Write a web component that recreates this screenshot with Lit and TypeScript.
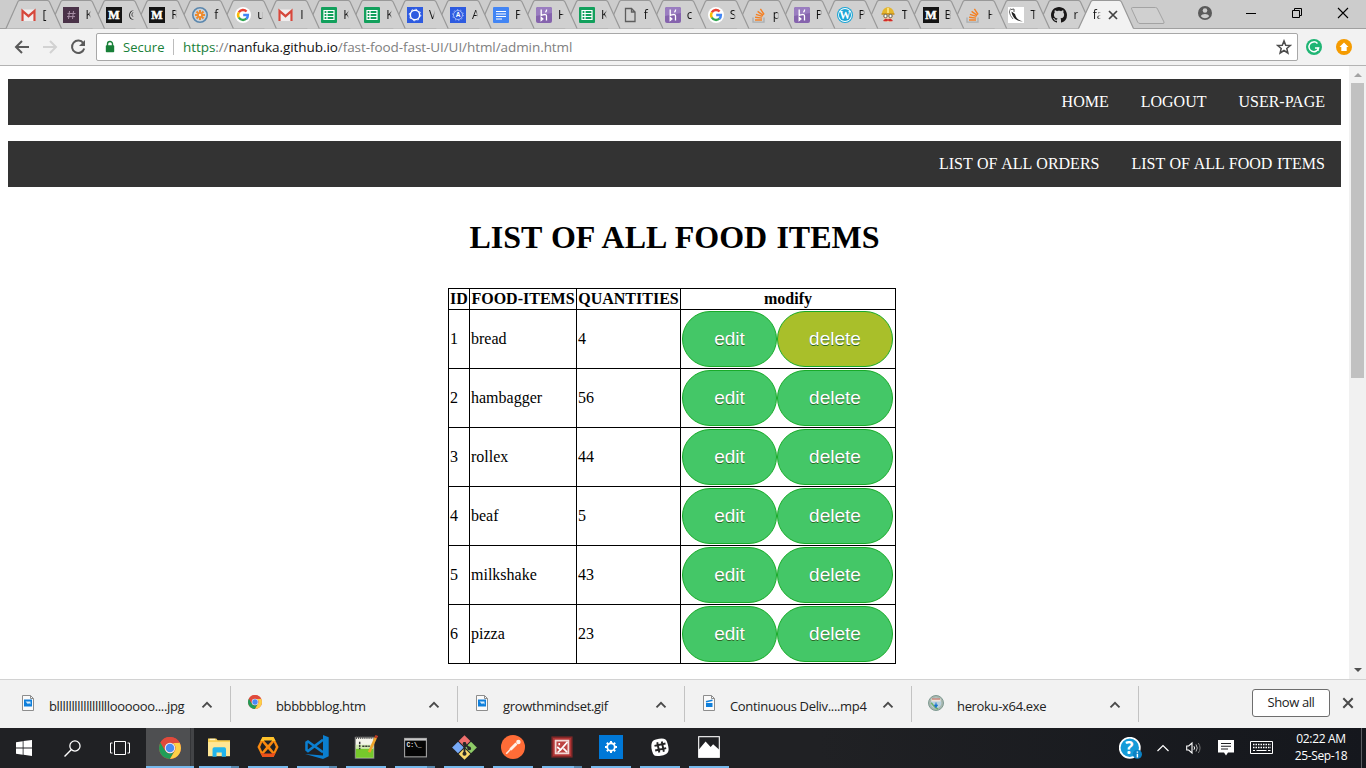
import { LitElement, html, svg, css } from "lit";
import { customElement, property } from "lit/decorators.js";
import { classMap } from "lit/directives/class-map.js";

const mediumIcon = svg`<rect width="16" height="16" fill="#141414"/><text x="8" y="12.2" text-anchor="middle" font-family="Liberation Serif, serif" font-weight="700" font-size="12" fill="#fff" stroke="#fff" stroke-width=".5">M</text>`;
const gmailIcon = svg`<rect x=".5" y="2.5" width="14" height="11.5" rx="1" fill="#f1eeee"/><path d="M1.5 14V4l6 5.2 6-5.2v10" fill="none" stroke="#d6483c" stroke-width="2.2"/>`;
const sheetsIcon = svg`<rect width="16" height="16" rx="1" fill="#12a05c"/><path d="M3 3.5h10v9H3zM6 3.5v9M3 6.5h10M3 9.5h10" fill="none" stroke="#fff" stroke-width="1.2"/>`;
const herokuIcon = svg`<rect width="16" height="16" rx="2" fill="#8563ad"/><path d="M0 2a2 2 0 0 1 2-2h12a2 2 0 0 1 2 2v4L0 9z" fill="#9a7dc0"/><path d="M5.2 2.5v6c1.5-.9 5.3-1.9 5.3.6v4.4M5.2 10.4v3l1.7-1.5zM10.6 2.5c0 1.3-.4 2-1.1 2.9" fill="none" stroke="#fff" stroke-width="1.3"/>`;
const googleIcon = svg`<circle cx="8" cy="8" r="8" fill="#fff"/><g fill="none" stroke-width="2.4"><path d="M3.8 5.4A4.9 4.9 0 0 1 11.6 4.5" stroke="#ea4335"/><path d="M3.9 5.3a4.9 4.9 0 0 0 0 5.4" stroke="#fbbc05"/><path d="M3.8 10.5a4.9 4.900 0 0 0 7.700 1" stroke="#34a853"/><path d="M8.2 8h4.700a4.900 4.900 0 0 1-1.600 3.800" stroke="#4285f4"/></g>`;
const stackIcon = svg`<path d="M2 10.5v4.7h11v-4.7" fill="none" stroke="#a9adb0" stroke-width="1.3"/><path d="M4 13h7M4.1 10.3l7 .8M4.9 7.4l6.6 2M6.6 4.4l5.6 4M9.4 1.8l3.7 5.7" stroke="#f48024" stroke-width="1.4"/>`;
const chromeIcon = svg`<circle cx="8" cy="8" r="8" fill="#e04a3c"/><path d="M1.1 4A8 8 0 0 0 8 16l3.5-6.1A4 4 0 0 1 4.4 9.7z" fill="#1f9e58"/><path d="M14.9 4A8 8 0 0 1 8 16l3.6-6.2A4 4 0 0 0 10 4.5z" fill="#fdd047"/><path d="M8 4.2h7A8 8 0 0 0 1.1 4l3.1 5.5" fill="#e04a3c"/><circle cx="8" cy="8" r="3.8" fill="#f1f1f1"/><circle cx="8" cy="8" r="3.1" fill="#4a8af4"/>`;
const paper = svg`<path d="M.5.5h8l3 3v12H.5z" fill="#fafafa" stroke="#8d8d8d"/><path d="M8.5.5v3h3" fill="none" stroke="#8d8d8d"/>`;

/** Every glyph is drawn on a 16 by 16 grid. */
const ICONS: Record<string, unknown> = {
  gmail: gmailIcon,
  medium: mediumIcon,
  sheets: sheetsIcon,
  heroku: herokuIcon,
  google: googleIcon,
  stack: stackIcon,
  chrome: chromeIcon,
  hash: svg`<rect width="16" height="16" fill="#4a3248"/><path d="M6.5 4l-1 8M10.5 4l-1 8M4.500 6.500h8M4 9.600h8" stroke="#a78fa5" stroke-width="1"/>`,
  flower: svg`<circle cx="8" cy="8" r="7.200" fill="#c9d2da" stroke="#5b87ad" stroke-width="1.600"/><path d="M8 3v10M3 8h10M4.500 4.500l7 7M11.500 4.500l-7 7" stroke="#ee8a2c" stroke-width="2"/><circle cx="8" cy="8" r="1.200" fill="#fbe7cf"/>`,
  ring: svg`<rect width="16" height="16" fill="#2e5be0"/><circle cx="8" cy="8" r="4.700" fill="none" stroke="#fff" stroke-width="1.500"/><circle cx="8" cy="8" r="5.800" fill="none" stroke="#fff" stroke-width="1" stroke-dasharray="1.500 3.050"/>`,
  ringA: svg`<rect width="16" height="16" fill="#2e5be0"/><circle cx="8" cy="8" r="4.500" fill="none" stroke="#a9bffa" stroke-width=".9"/><circle cx="8" cy="8" r="5.400" fill="none" stroke="#a9bffa" stroke-dasharray="1.200 2.200"/><text x="8" y="10.300" text-anchor="middle" font-family="Liberation Sans, sans-serif" font-weight="700" font-size="6.500" fill="#fff">A</text>`,
  docs: svg`<rect width="16" height="16" rx="1" fill="#4285f4"/><path d="M3 4.500h10M3 7h10M3 9.500h10M3 12h6" stroke="#fff" stroke-width="1.200"/>`,
  page: svg`<path d="M3.500 1.500h6l3.500 3.500v9.500H3.500zM9.500 1.500V5H13" fill="none" stroke="#5d5d5d" stroke-width="1.300"/>`,
  wordpress: svg`<circle cx="8" cy="8" r="8" fill="#1ca5d5"/><circle cx="8" cy="8" r="6.900" fill="#fff"/><circle cx="8" cy="8" r="6.100" fill="#1ca5d5"/><text x="8" y="12" text-anchor="middle" font-family="Liberation Serif, serif" font-weight="700" font-size="11.500" fill="#fff">W</text>`,
  builder: svg`<path d="M3 8h10v3l-2 4H5l-2-4z" fill="#e9c9a9"/><path d="M2 7c0-9 12-9 12 0z" fill="#e5b62d"/><path d="M1.500 7h13" stroke="#c68e1b" stroke-width="1.500"/><path d="M8 1v5" stroke="#f9df7a" stroke-width="2"/><circle cx="5.500" cy="9" r="1.700" fill="#fff" stroke="#665"/><circle cx="10.500" cy="9" r="1.700" fill="#fff" stroke="#665"/><path d="M3 14c2-3 4-2.500 5-1.500 1-1 3-1.500 5 1.500-2 .5-4 .5-5-.5-1 1-3 1-5 .5z" fill="#d22b2b"/>`,
  flask: svg`<rect width="16" height="16" fill="#fff"/><path d="M3.500 4.500c.5 5 4 10 11.500 9.800-4.500-.8-7-3-8-7.300z" fill="#222"/><path d="M2.500 1.500 1.300 5l1.200 3.500L5 12" fill="none" stroke="#777"/><path d="M3 2.500 6 2v3" stroke="#555" fill="none"/>`,
  github: svg`<path fill="#191717" d="M8 0C3.580 0 0 3.580 0 8c0 3.540 2.290 6.530 5.470 7.590.4.070.55-.17.55-.38 0-.19-.01-.82-.01-1.490-2.010.37-2.530-.49-2.690-.94-.09-.23-.48-.94-.82-1.130-.28-.15-.68-.52-.01-.53.63-.01 1.080.58 1.230.82.72 1.210 1.870.87 2.330.66.07-.52.28-.87.51-1.070-1.780-.2-3.640-.89-3.640-3.950 0-.87.31-1.590.82-2.150-.08-.2-.36-1.020.08-2.120 0 0 .67-.21 2.200.82.64-.18 1.320-.27 2-.27s1.360.09 2 .27c1.530-1.040 2.200-.82 2.200-.82.44 1.100.16 1.920.08 2.120.51.56.82 1.270.82 2.150 0 3.070-1.870 3.750-3.650 3.950.29.25.54.73.54 1.480 0 1.070-.01 1.930-.01 2.200 0 .21.15.46.55.38A8.010 8.010 0 0 0 16 8c0-4.420-3.580-8-8-8z"/>`,
  back: svg`<path d="M15 8H2.500M8 2 2 8l6 6" fill="none" stroke="#5a5a5a" stroke-width="2"/>`,
  forward: svg`<path d="M1 8h12.500M8 2l6 6-6 6" fill="none" stroke="#d2d2d2" stroke-width="2"/>`,
  reload: svg`<path d="M13.300 4.200A6.200 6.200 0 1 0 14.200 9.500" fill="none" stroke="#5a5a5a" stroke-width="2"/><path d="M15 1v6H9z" fill="#5a5a5a"/>`,
  lock: svg`<rect x="3.800" y="6.200" width="8.400" height="7" rx=".8" fill="#188038"/><path d="M5.500 7V5a2.500 2.500 0 0 1 5 0v2" fill="none" stroke="#188038" stroke-width="1.400"/>`,
  star: svg`<path d="m8 1.900 1.700 4.300 4.600.3-3.500 3 1.100 4.500L8 11.500 4.100 14l1.100-4.500-3.500-3 4.600-.3z" fill="none" stroke="#4c4c4c" stroke-width="1.500"/>`,
  grammarly: svg`<circle cx="8" cy="8" r="8" fill="#1fb574"/><path d="M11.500 4.500A4.900 4.900 0 1 0 12.600 9H9" fill="none" stroke="#fff" stroke-width="1.500"/><path d="M12 8.500v3.500" stroke="#fff" stroke-width="1.300"/>`,
  upload: svg`<circle cx="8" cy="8" r="8" fill="#f59b00"/><path d="M8 3.500 12.500 8H10.700v4H5.300V8H3.500z" fill="#fff"/>`,
  person: svg`<circle cx="8" cy="8" r="7" fill="#5a5a5a"/><circle cx="8" cy="5.500" r="2.300" fill="#ccc"/><path d="M3.800 11.300c1-3 7.400-3 8.400 0a5.500 5.500 0 0 1-8.400 0z" fill="#ccc"/>`,
  minimise: svg`<path d="M3 8.500h10" stroke="#000"/>`,
  restore: svg`<path d="M3.500 5.500h7v7h-7zM5.500 5.500v-2h7v7h-2" fill="none" stroke="#000"/>`,
  close: svg`<path d="m3 3 10 10M13 3 3 13" stroke="#000" stroke-width="1.100"/>`,
  cross: svg`<path d="m4 4 8 8M12 4l-8 8" stroke="#424242" stroke-width="1.700"/>`,
  shelfCross: svg`<path d="m3.300 3.300 9.400 9.400M12.700 3.300l-9.400 9.400" stroke="#4a4a4a" stroke-width="2"/>`,
  chevron: svg`<path d="m3.500 10.300 4.500-4.500 4.500 4.500" fill="none" stroke="#4a4a4a" stroke-width="1.900"/>`,
  trayChevron: svg`<path d="m2.500 11 5.500-5.500 5.500 5.500" fill="none" stroke="#fff" stroke-width="1.200"/>`,
  picture: svg`${paper}<rect x="2" y="4.500" width="8" height="7" fill="#0f7fdb"/><path d="M3.500 6.500h5v3L7 8 6 9.200 5 8z" fill="#d8ecfb"/>`,
  video: svg`${paper}<path d="M3 8h6.500v4H3z" fill="#0f7fdb"/><path d="m3 6.700 6.500-1.400" stroke="#0f7fdb" stroke-width="1.600"/>`,
  installer: svg`<circle cx="8" cy="8" r="7.500" fill="#a8b7ae" stroke="#7f9a92"/><circle cx="8" cy="8" r="5.400" fill="#b8d0dd"/><path d="M3.500 3.500h9v3h-9z" fill="#eee2da"/><path d="M4 4h8" stroke="#b65b4a"/><path d="M3 8c2 1 3 5 7 6" stroke="#6caf6a" stroke-width="1.600" fill="none"/><path d="M8 7.500v3M6.500 10l1.500 2.500L9.500 10z" fill="#1973cf" stroke="#1973cf" stroke-width="1"/>`,
  windows: svg`<path d="M0 2.200 6.700 1.200v6.300H0zM7.500 1.100 16 0v7.500H7.500zM0 8.400h6.700v6.300L0 13.700zM7.500 8.400H16V16l-8.500-1.200z" fill="#fff"/>`,
  search: svg`<circle cx="10.300" cy="5.600" r="4.800" fill="none" stroke="#fff" stroke-width="1.200"/><path d="M7 9 .5 15.500" stroke="#fff" stroke-width="1.300"/>`,
  folder: svg`<path d="M0 1.800h6l1 1.300h9v11.500H0z" fill="#f8cf54"/><path d="M0 4.400h16v10.300H0z" fill="#ffe695"/><path d="M1.200 2.500h4" stroke="#fff5ca"/><path d="M3.300 15V9.500q0-1.300 1.300-1.300h7.300q1.200 0 1.200 1.300V15H10v-3H6.200v3z" fill="#22b5ec"/>`,
  xampp: svg`<path d="M4 .7h8L15.700 8 12 15.300H4L.3 8z" fill="#f9890f"/><path d="M4 .7h8l1.500 3H2.500z" fill="#ffc32b"/><path d="m2.500 12.300 1.500 3h8l1.500-3z" fill="#ec511a"/><path d="M5 3.200h6L8 6.500zM3.800 4.600 6.600 8l-2.800 3.400L2.300 8zM12.200 4.600 9.400 8l2.800 3.400L13.700 8zM5 12.800h6L8 9.500z" fill="#202124"/>`,
  vscode: svg`<path d="M12 0 15.800 1.500v12.700L12 16 0 12.700l12 1z" fill="#0b7fd0"/><path d="M12 3.200 2 10.700l-1-.8V5l1-.7 10 7.200" fill="none" stroke="#0b7fd0" stroke-width="1.700"/>`,
  notepad: svg`<rect x=".8" y="1.500" width="12.500" height="14" fill="#f3f3ea" stroke="#777" stroke-width=".6"/><path d="M1.200 9h11.800v6.200H1.200z" fill="#76c82b"/><path d="M1.200 6.500h11.800V9H1.200z" fill="#cfe9ae"/><path d="M1.300 1.800h11.500" stroke="#555" stroke-width="1.600" stroke-dasharray=".7 .7"/><path d="M3.800 4.500v5M5.500 7.500h5" stroke="#333" stroke-width="1" stroke-dasharray="1.500 .5"/><path d="m14.600 1.500-4.500 10" stroke="#eea32a" stroke-width="1.800"/><path d="m15.200.3-.8 1.700" stroke="#b73b25" stroke-width="1.900"/>`,
  terminal: svg`<rect x=".4" y="1.700" width="15.200" height="12.800" fill="#050505" stroke="#9c9c9c" stroke-width=".8"/><path d="M.5 2.500h15" stroke="#c9c9c9" stroke-width="1.400"/><text x="1.700" y="7.800" font-family="Liberation Mono, monospace" font-size="4.400" font-weight="700" fill="#e8e8e8">C:\\_</text>`,
  git: svg`<g transform="rotate(45 8 8)"><rect x="2.400" y="2.400" width="5.300" height="5.300" fill="#ef6f6d"/><rect x="8.300" y="2.400" width="5.300" height="5.300" fill="#8ecb67"/><rect x="2.400" y="8.300" width="5.300" height="5.300" fill="#78aaf8"/><rect x="8.300" y="8.300" width="5.300" height="5.300" fill="#fbd96c"/></g><path d="M8 4.500v8M8 5.500 11 8.500" stroke="#292929" stroke-width="1.200"/><circle cx="8" cy="12" r="1.300" fill="#292929"/><circle cx="8" cy="5.600" r="1.200" fill="#292929"/><circle cx="11" cy="8.600" r="1.200" fill="#292929"/>`,
  postman: svg`<circle cx="8" cy="8" r="8" fill="#ff6c37"/><path d="m3.500 12.500 3.500-3.700" stroke="#fff0e8" stroke-width="1"/><path d="m6.300 9.700 4-4.100" stroke="#fff0e8" stroke-width="1.900"/><circle cx="11.600" cy="4.600" r="1.500" fill="#fff0e8"/>`,
  redBox: svg`<rect x=".8" y=".8" width="14.400" height="14.400" fill="#b03535" stroke="#7d2727"/><rect x="2.700" y="2.700" width="10.600" height="10.600" fill="#f2d9d6"/><path d="M4 4h8v8H4z" fill="#bd4341"/><path d="M4.500 8 7 10 12 4.300M6 5v1.700M4.800 12l2.500-2.300M9 9l2.700 2.700" stroke="#fff" stroke-width="1.200" fill="none"/>`,
  settings: svg`<rect width="16" height="16" fill="#0078d7"/><circle cx="8" cy="8" r="2.500" fill="none" stroke="#fff" stroke-width="1.200"/><path d="M8 4v1.300M8 10.700V12M4 8h1.300M10.700 8H12M5.200 5.200l.9.9M9.900 9.900l.9.900M10.800 5.200l-.9.9M6.100 9.900l-.9.900" stroke="#fff" stroke-width="1.300"/>`,
  slack: svg`<path d="M2 5Q2.500 3 5 2.500q5-1.500 7 0Q13 3 14 7.500t-1.500 5.500Q11 14 7.500 14.500T3 13Q1 8 2 5z" fill="#fff"/><path d="m6 4.500 1.500 7.500M9.300 4l1.500 7.500M4 7.200l8-1.700M4.500 10.500l8-1.700" stroke="#242424" stroke-width="1.400"/>`,
  photos: svg`<rect x=".5" y=".5" width="15" height="15" fill="#202124" stroke="#fff" stroke-width=".8"/><path d="M.5 10 5.500 4l3.700 4 1.800-2 4.500 4v5.500H.5z" fill="#fff"/>`,
  help: svg`<circle cx="7.500" cy="7.500" r="7" fill="#159bd8" stroke="#fff" stroke-width="1.200"/><text x="7.200" y="12" text-anchor="middle" font-family="Open Sans, sans-serif" font-weight="700" font-size="12" fill="#fff">?</text><circle cx="12.800" cy="12" r="3.200" fill="#0b82c5"/><path d="M12.800 10v.9M12.800 11.600v2.600" stroke="#fff" stroke-width="1"/>`,
  speaker: svg`<path d="M.7 6v4h2L6 13V3L2.700 6z" fill="none" stroke="#fff" stroke-width="1.100"/><path d="M8 6.300q1.200 1.700 0 3.400" stroke="#fff" fill="none"/><path d="M10 4.500q2.500 3.500 0 7" stroke="#bbb" fill="none"/><path d="M12.300 3q3.500 5 0 10" stroke="#777" fill="none"/>`,
  message: svg`<path d="M0 0h16v12.500H10L8 15.500l-2-3H0z" fill="#fff"/><path d="M3 3.500h10M3 6.300h10M3 9h7" stroke="#202124" stroke-width="1.100"/>`,
};

@customElement("ui-icon")
class UiIcon extends LitElement {
  @property() name = "";
  @property({ type: Number }) size = 16;
  static styles = css`
    :host { display: block; flex: none; line-height: 0; }
    svg { display: block; }
  `;
  render() {
    return html`<svg viewBox="0 0 16 16" width=${this.size} height=${this.size}>${ICONS[this.name]}</svg>`;
  }
}

const TABS: [string, string][] = [
  ["gmail", "["], ["hash", "K"], ["medium", "@"], ["medium", "R"], ["flower", "f"], ["google", "u"],
  ["gmail", "I"], ["sheets", "K"], ["sheets", "K"], ["ring", "V"], ["ringA", "A"], ["docs", "F"],
  ["heroku", "H"], ["sheets", "K"], ["page", "f"], ["heroku", "c"], ["google", "S"], ["stack", "p"],
  ["heroku", "P"], ["wordpress", "P"], ["builder", "T"], ["medium", "B"], ["stack", "H"],
  ["flask", "T"], ["github", "r"],
];

@customElement("tab-strip")
class TabStrip extends LitElement {
  static styles = css`
    :host { display: flex; position: relative; height: 29px; background: #ccc; box-sizing: border-box; padding-left: 6px; font: 12px "Open Sans", sans-serif; color: #111; }
    .outline { position: absolute; left: 0; top: 0; }
    .tab { position: relative; flex: none; width: 42.96px; height: 29px; box-sizing: border-box; padding: 0 0 0 14.5px; display: flex; align-items: center; gap: 6px; }
    .title { width: 6px; white-space: nowrap; -webkit-mask-image: linear-gradient(90deg, #000 60%, transparent); }
    .tab.active { width: 70px; padding-left: 13px; gap: 4px; }
    .active .title { width: 8px; }
    .controls { position: relative; display: flex; align-items: center; height: 26px; margin-left: auto; padding-right: 15px; gap: 30px; }
  `;
  render() {
    const n = TABS.length;
    const start = (i: number) => 6 + i * 42.96;
    return html`
      <svg class="outline" width="1366" height="29">
        <path d="M0 28.500H1366" stroke="#a0a0a0" />
        ${TABS.map((_, k) => n - 1 - k).map((i) => {
          const x = start(i);
          return svg`<path d="M${x} 28.500 L${x + 12} 1.500 Q${x + 12.5} .500 ${x + 14} .500 H${x + 41} Q${x + 42.5} .500 ${x + 43.5} 2 L${x + 55.5} 28.500" fill="#d0d0d0" stroke="#999" stroke-width="1.200"/>`;
        })}
        <path d="M1078.500 29 1091 1.500Q1091.500.500 1093 .500h26q1.500 0 2.500 1.500L1133.500 29z" fill="#f2f2f2" />
        <path d="M1078.500 28.500 1091 1.500Q1091.500.500 1093 .500h26q1.500 0 2.500 1.500L1133.500 28.500" fill="none" stroke="#999" stroke-width="1.200" />
        <path d="M1132.500 7.500h23q1.500 0 2 1.500l6.500 13q.5 1.500-1 1.500h-23q-1.500 0-2.300-1.300l-6-13q-.7-1.700.8-1.700z" fill="#d0d0d0" stroke="#a3a3a3" />
      </svg>
      ${TABS.map(([icon, title]) => html`<div class="tab"><ui-icon name=${icon}></ui-icon><span class="title">${title}</span></div>`)}
      <div class="tab active"><span class="title">fa</span><ui-icon name="cross"></ui-icon></div>
      <div class="controls">
        <ui-icon name="person"></ui-icon><ui-icon name="minimise"></ui-icon><ui-icon name="restore"></ui-icon><ui-icon name="close"></ui-icon>
      </div>
    `;
  }
}

@customElement("address-bar")
class AddressBar extends LitElement {
  static styles = css`
    :host { display: flex; align-items: center; height: 37px; box-sizing: border-box; border-bottom: 1px solid #b3b3b3; background: #f2f2f2; padding: 0 14px 0 14px; font: 13px/26px "Open Sans", sans-serif; }
    .nav { display: flex; gap: 12px; width: 82px; }
    .box { display: flex; align-items: center; width: 1202px; height: 28px; box-sizing: border-box; border: 1px solid #a8a8a8; border-radius: 2px; background: #fff; padding: 0 5px; }
    .secure { margin-left: 5px; width: 42px; color: #188038; white-space: nowrap; letter-spacing: 0.05px; }
    .rule { width: 1px; height: 16px; margin: 0 9px 0 8px; background: #bcbcbc; }
    .url { color: #808080; white-space: nowrap; font-size: 13.5px; letter-spacing: -0.07px; }
    .scheme { color: #188038; }
    .host { color: #111; }
    .star { margin-left: auto; }
    .ext { display: flex; gap: 14px; margin-left: 8px; }
  `;
  render() {
    return html`
      <div class="nav"><ui-icon name="back"></ui-icon><ui-icon name="forward"></ui-icon><ui-icon name="reload"></ui-icon></div>
      <div class="box">
        <ui-icon name="lock"></ui-icon><span class="secure">Secure</span><span class="rule"></span>
        <span class="url"><span class="scheme">https</span>://<span class="host">nanfuka.github.io</span>/fast-food-fast-UI/UI/html/admin.html</span>
        <ui-icon class="star" name="star"></ui-icon>
      </div>
      <div class="ext"><ui-icon name="grammarly"></ui-icon><ui-icon name="upload"></ui-icon></div>
    `;
  }
}

const FOODS: [number, string, number][] = [
  [1, "bread", 4], [2, "hambagger", 56], [3, "rollex", 44], [4, "beaf", 5], [5, "milkshake", 43], [6, "pizza", 23],
];

@customElement("food-page")
class FoodPage extends LitElement {
  static styles = css`
    :host { display: flex; height: 613px; overflow: hidden; background: #fff; color: #000; font: 16px "Liberation Serif", serif; }
    .page { flex: 1; padding: 13px 8px 0; }
    .bar { display: flex; justify-content: flex-end; height: 46px; margin-bottom: 16px; background: #333; color: #fff; word-spacing: 0.6px; }
    .link { padding: 14px 16px; line-height: 18px; }
    h1 { margin: 31px 0 32px; font-size: 32px; line-height: 38px; text-align: center; word-spacing: 1.15px; }
    table { table-layout: fixed; width: 448px; margin-left: 440px; border-collapse: collapse; }
    th, td { border: 1px solid #000; padding: 1px; white-space: nowrap; }
    th { height: 18px; line-height: 18px; }
    td { height: 56px; }
    .c1 { width: 21px; } .c2 { width: 107px; } .c3 { width: 104px; } .c4 { width: 215px; }
    .actions { display: flex; }
    .btn { margin: 0; box-sizing: border-box; width: 95px; height: 56px; padding: 16px 0; border: 1px solid #18ab29; border-radius: 28px; background: #44c767; color: #fff; font: 19px/22px "Liberation Sans", Arial, sans-serif; text-shadow: 0 1px 0 #2f6627; }
    .btn.wide { width: 116px; }
    .btn.hot { background: #a9bf2a; }
    .scroll { display: flex; flex-direction: column; align-items: center; width: 17px; background: #f1f1f1; }
    .arrow { height: 17px; display: flex; align-items: center; }
    .thumb { width: 13px; height: 295px; background: #c1c1c1; }
    .arrow.down { margin-top: auto; height: 19px; }
  `;
  render() {
    return html`
      <div class="page">
        <div class="bar"><span class="link">HOME</span><span class="link">LOGOUT</span><span class="link">USER-PAGE</span></div>
        <div class="bar"><span class="link">LIST OF ALL ORDERS</span><span class="link">LIST OF ALL FOOD ITEMS</span></div>
        <h1>LIST OF ALL FOOD ITEMS</h1>
        <table>
          <colgroup><col class="c1" /><col class="c2" /><col class="c3" /><col class="c4" /></colgroup>
          <tr><th>ID</th><th>FOOD-ITEMS</th><th>QUANTITIES</th><th>modify</th></tr>
          ${FOODS.map(([id, name, qty], i) => html`<tr><td>${id}</td><td>${name}</td><td>${qty}</td>
            <td><div class="actions"><button class="btn">edit</button><button class=${classMap({ btn: true, wide: true, hot: i === 0 })}>delete</button></div></td></tr>`)}
        </table>
      </div>
      <div class="scroll">
        <span class="arrow"><svg width="8" height="4"><path d="M0 4 4 0l4 4z" fill="#a3a3a3" /></svg></span>
        <span class="thumb"></span>
        <span class="arrow down"><svg width="8" height="4"><path d="M0 0h8L4 4z" fill="#505050" /></svg></span>
      </div>
    `;
  }
}

const DOWNLOADS: [string, string][] = [
  ["picture", "blllllllllllllllllloooooo....jpg"],
  ["chrome", "bbbbbblog.htm"],
  ["picture", "growthmindset.gif"],
  ["video", "Continuous Deliv....mp4"],
  ["installer", "heroku-x64.exe"],
];

@customElement("download-shelf")
class DownloadShelf extends LitElement {
  static styles = css`
    :host { display: flex; height: 49px; box-sizing: border-box; border-top: 1px solid #d2d2d2; background: #f2f2f2; font: 13px "Open Sans", sans-serif; color: #222; }
    .item { display: flex; box-sizing: border-box; width: 227px; height: 36px; margin-top: 6px; border-right: 1px solid #c3c3c3; padding: 9px 15px 0 16px; }
    .item.first { width: 231px; padding-left: 20px; }
    .icon { display: flex; justify-content: center; width: 16px; }
    .sheet { justify-content: flex-start; padding-left: 2px; width: 14px; }
    .name { margin: 2px 0 0 13px; line-height: 18px; white-space: nowrap; letter-spacing: -0.33px; }
    .up { margin: 2px 0 0 auto; }
    .end { display: flex; align-items: center; gap: 10px; height: 46px; margin-left: auto; padding-right: 10px; }
    .all { box-sizing: border-box; width: 78px; height: 28px; border: 1px solid #6e6e6e; border-radius: 3px; background: #fff; text-align: center; line-height: 25px; letter-spacing: -0.4px; }
  `;
  render() {
    return html`
      ${DOWNLOADS.map(([icon, name], i) => html`<div class=${classMap({ item: true, first: i === 0 })}>
        <span class=${classMap({ icon: true, sheet: icon === "picture" || icon === "video" })}><ui-icon name=${icon} size=${icon === "chrome" ? 14 : 16}></ui-icon></span><span class="name">${name}</span><ui-icon class="up" name="chevron"></ui-icon></div>`)}
      <div class="end"><span class="all">Show all</span><ui-icon name="shelfCross"></ui-icon></div>
    `;
  }
}

const APPS: [string, number, boolean][] = [
  ["folder", 22, true], ["xampp", 22, false], ["vscode", 24, true], ["notepad", 24, false], ["terminal", 23, true],
  ["git", 25, false], ["postman", 24, false], ["redBox", 22, true], ["settings", 24, false], ["slack", 22, false], ["photos", 22, false],
];

@customElement("task-bar")
class TaskBar extends LitElement {
  static styles = css`
    :host { display: flex; height: 40px; background: linear-gradient(90deg, #202124 0 60%, #17191e 90%, #15171d); color: #fff; font: 12px "Open Sans", sans-serif; }
    .system { display: flex; width: 146px; align-items: center; }
    .system > * { width: 48px; display: flex; justify-content: center; }
    .chrome { display: flex; box-sizing: border-box; width: 48px; padding: 9px 0 0 12.5px; border-bottom: 2px solid #76b9ed; background: linear-gradient(90deg, #4e4f51 0 44px, #343538 44px 45px, #434447 45px); }
    .apps { display: flex; padding-left: 5px; gap: 9px; }
    .app { display: flex; box-sizing: border-box; width: 40px; justify-content: center; align-items: center; border-bottom: 2px solid #76b9ed; }
    .app.group { border-image: linear-gradient(90deg, #76b9ed 31px, #5888ae 31px) 2; border-width: 0 0 2px; border-style: solid; }
    .tray { display: flex; align-items: center; margin-left: auto; }
    .chev { margin-left: 13px; } .speak { margin-left: 15px; } .msg { margin-left: 16px; } .keys { margin-left: 16px; }
    .clock { width: 74px; margin-left: 10px; text-align: center; line-height: 17px; letter-spacing: -0.35px; white-space: nowrap; padding-bottom: 3px; }
    .peek { width: 4px; height: 40px; margin-left: 3px; border-left: 1px solid #5b5d62; }
  `;
  render() {
    return html`
      <div class="system">
        <ui-icon name="windows"></ui-icon>
        <ui-icon name="search" size="17"></ui-icon>
        <span><svg width="20" height="14"><path d="M4.500.500h11v13h-11zM2.500 2h-2v10h2M17.500 2h2v10h-2" fill="none" stroke="#fff" /></svg></span>
      </div>
      <div class="chrome"><ui-icon name="chrome" size="22"></ui-icon></div>
      <div class="apps">
        ${APPS.map(([icon, size, group]) => html`<div class=${classMap({ app: true, group })}><ui-icon name=${icon} size=${size}></ui-icon></div>`)}
      </div>
      <div class="tray">
        <ui-icon name="help" size="23"></ui-icon>
        <ui-icon class="chev" name="trayChevron"></ui-icon>
        <ui-icon class="speak" name="speaker"></ui-icon>
        <ui-icon class="msg" name="message"></ui-icon>
        <svg class="keys" width="24" height="14"><path d="M.500.500h22v12H.500z" fill="none" stroke="#fff" /><path d="M3 3.500h18M3 6.500h18" stroke="#fff" stroke-width="1.500" stroke-dasharray="1.500 1" /><path d="M3 9.500h2M6.500 9.500h10M18 9.500h2.500" stroke="#fff" /></svg>
        <div class="clock">02:22 AM<br />25-Sep-18</div>
        <span class="peek"></span>
      </div>
    `;
  }
}

@customElement("app-root")
class AppRoot extends LitElement {
  static styles = css`
    :host { display: flex; flex-direction: column; width: 1366px; height: 768px; overflow: hidden; background: #fff; }
  `;
  render() {
    return html`<tab-strip></tab-strip><address-bar></address-bar><food-page></food-page><download-shelf></download-shelf><task-bar></task-bar>`;
  }
}
